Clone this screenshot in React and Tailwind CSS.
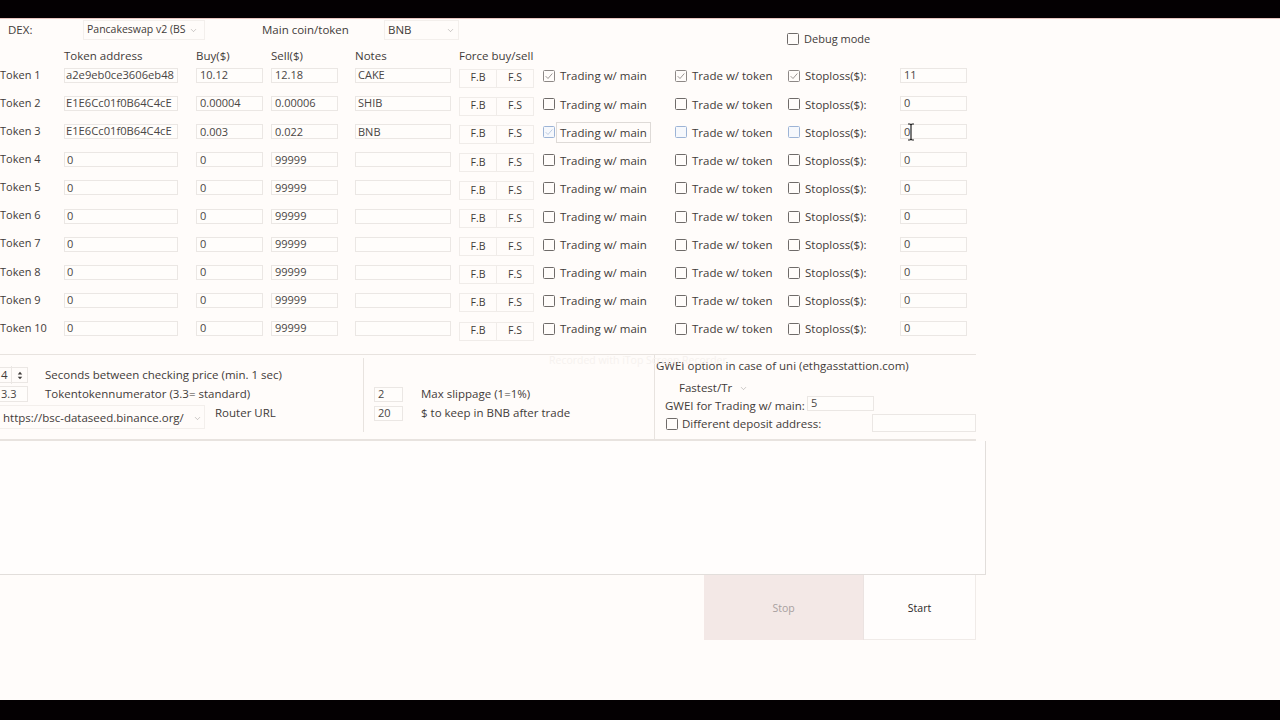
import { ChevronDown } from "lucide-react";

const tokens = [
  { address: "a2e9eb0ce3606eb48", buy: "10.12", sell: "12.18", notes: "CAKE", stop: "11", checked: true },
  { address: "E1E6Cc01f0B64C4cE", buy: "0.00004", sell: "0.00006", notes: "SHIB", stop: "0" },
  { address: "E1E6Cc01f0B64C4cE", buy: "0.003", sell: "0.022", notes: "BNB", stop: "0", focused: true },
  { address: "0", buy: "0", sell: "99999", notes: "", stop: "0" },
  { address: "0", buy: "0", sell: "99999", notes: "", stop: "0" },
  { address: "0", buy: "0", sell: "99999", notes: "", stop: "0" },
  { address: "0", buy: "0", sell: "99999", notes: "", stop: "0" },
  { address: "0", buy: "0", sell: "99999", notes: "", stop: "0" },
  { address: "0", buy: "0", sell: "99999", notes: "", stop: "0" },
  { address: "0", buy: "0", sell: "99999", notes: "", stop: "0" },
];

function Check({ checked, hot }) {
  return (
    <span
      className={`flex h-[12px] w-[12px] shrink-0 items-center justify-center rounded-[1.5px] border ${
        hot ? "border-[#9db4d6] bg-[#f6f8fc]" : checked ? "border-[#8d8886]" : "border-[#6f6b69]"
      }`}
    >
      {checked && (
        <svg viewBox="0 0 12 12" className="h-[10px] w-[10px]" fill="none" stroke={hot ? "#a9bcd8" : "#77726f"} strokeWidth="0.9">
          <path d="M2 6.2 4.8 9 10 3" />
        </svg>
      )}
    </span>
  );
}

function Field({ value, className = "" }) {
  return (
    <input
      readOnly
      value={value}
      className={`h-[15px] border border-[#ebe7e4] bg-[#fffdfb] text-[#4a4644] outline-none ${className}`}
    />
  );
}

function Dropdown({ text, className = "" }) {
  return (
    <div className={`flex items-center border border-[#f3efec] text-[#3f3b39] ${className}`}>
      <span className="flex-1 overflow-hidden whitespace-nowrap">{text}</span>
      <ChevronDown className="h-[9px] w-[9px] shrink-0 text-[#8c8886]" strokeWidth={1.2} />
    </div>
  );
}

function TokenRow({ index, token }) {
  return (
    <div className="flex h-[28.11px] items-center">
      <div className="w-[64px] shrink-0 whitespace-nowrap text-[11px]">Token {index + 1}</div>
      <Field
        value={token.address}
        className={`mt-px w-[114px] ${token.address === "0" ? "pl-[2px] text-[11px]" : "pl-px text-[11.2px]"}`}
      />
      <Field value={token.buy} className="ml-[18px] mt-px w-[67px] pl-[3px] text-[11px]" />
      <Field value={token.sell} className="ml-[8px] mt-px w-[67px] pl-[3px] text-[11px]" />
      <Field value={token.notes} className="ml-[17px] mt-px w-[96px] pl-[2px] text-[11px]" />
      <div className="ml-[8px] mt-[6px] flex h-[19px] w-[75px] text-[10.5px]">
        <button className="h-full w-[37px] border border-r-0 border-[#f0ece9] text-[#3f3b39]">F.B</button>
        <button className="h-full w-[38px] border border-[#f0ece9] text-[#3f3b39]">F.S</button>
      </div>
      <div className="ml-[9px] mt-[2px] flex w-[132px] items-center">
        <Check checked={token.checked || token.focused} hot={token.focused} />
        <span
          className={`ml-px whitespace-nowrap border px-[3px] py-px ${
            token.focused ? "border-[#dedad7]" : "border-transparent"
          }`}
        >
          Trading w/ main
        </span>
      </div>
      <div className="mt-[2px] flex w-[113px] items-center">
        <Check checked={token.checked} hot={token.focused} />
        <span className="ml-[5px] whitespace-nowrap">Trade w/ token</span>
      </div>
      <div className="mt-[2px] flex w-[112px] items-center">
        <Check checked={token.checked} hot={token.focused} />
        <span className="ml-[5px] whitespace-nowrap">Stoploss($):</span>
      </div>
      <Field value={token.stop} className="mt-px w-[67px] pl-[3px] text-[11px]" />
    </div>
  );
}

export default function App() {
  return (
    <div className="relative flex h-[720px] w-[1280px] flex-col overflow-hidden bg-[#fffcfa] font-['Open_Sans',sans-serif] text-[11.5px] text-[#3f3b39]">
      <div className="h-[19px] shrink-0 border-b border-[#e8c4c0] bg-[#040002]" />

      {/* dex + main coin */}
      <div className="flex h-[32px] shrink-0 items-start pt-px">
        <div className="ml-[8px] w-[75px] leading-[20px]">DEX:</div>
        <Dropdown text="Pancakeswap v2 (BS" className="h-[20px] w-[122px] pl-[3px] pr-[6px] text-[10.5px]" />
        <div className="ml-[57px] w-[122px] leading-[20px]">Main coin/token</div>
        <Dropdown text="BNB" className="h-[20px] w-[75px] pl-[3px] pr-[3px]" />
        <div className="ml-[328px] mt-[11px] flex items-center">
          <Check />
          <span className="ml-[5px] whitespace-nowrap text-[11px]">Debug mode</span>
        </div>
      </div>

      {/* column headers */}
      <div className="flex h-[10px] shrink-0 items-center whitespace-nowrap">
        <div className="ml-[64px] w-[132px]">Token address</div>
        <div className="w-[75px]">Buy($)</div>
        <div className="w-[84px]">Sell($)</div>
        <div className="w-[104px]">Notes</div>
        <div>Force buy/sell</div>
      </div>

      <div className="shrink-0">
        {tokens.map((token, i) => (
          <TokenRow key={i} index={i} token={token} />
        ))}
      </div>

      {/* settings strip */}
      <div className="mt-[12px] flex h-[87px] w-[976px] shrink-0 border-t border-b-2 border-[#e8e3df]">
        <div className="mt-[3px] h-[74px] w-[364px] shrink-0 border-r border-[#e8e3df]">
          <div className="mt-[9px] flex h-[16px] items-center">
            <div className="flex h-[16px] w-[28px] items-center justify-between border-y border-r border-[#ebe7e4] pl-px pr-[4px]">
              <span className="w-[11px] border-r border-[#ebe7e4]">4</span>
              <svg viewBox="0 0 8 12" className="h-[11px] w-[6px]" fill="#3f3b39">
                <path d="M4 1 7 4.5H1zM4 11 1 7.5h6z" />
              </svg>
            </div>
            <span className="ml-[17px] whitespace-nowrap">Seconds between checking price (min. 1 sec)</span>
          </div>
          <div className="mt-[3px] flex h-[16px] items-center">
            <Field value="3.3" className="h-[16px] w-[28px] border-l-0 pl-px text-[11px]" />
            <span className="ml-[17px] whitespace-nowrap">Tokentokennumerator (3.3= standard)</span>
          </div>
          <div className="mt-[3px] flex items-start">
            <Dropdown text="https://bsc-dataseed.binance.org/" className="h-[24px] w-[205px] border-l-0 pl-[3px] pr-[2px] pt-[2px] text-[11.5px]" />
            <span className="ml-[10px] mt-[-1px] whitespace-nowrap">Router URL</span>
          </div>
        </div>

        <div className="w-[291px] shrink-0 border-r border-[#e8e3df] pl-[10px] pt-[31px]">
          <div className="flex h-[16px] items-center">
            <Field value="2" className="w-[29px] pl-[3px] text-[11px]" />
            <span className="ml-[18px] whitespace-nowrap">Max slippage (1=1%)</span>
          </div>
          <div className="mt-[3px] flex h-[16px] items-center">
            <Field value="20" className="w-[29px] pl-[3px] text-[11px]" />
            <span className="ml-[18px] whitespace-nowrap">$ to keep in BNB after trade</span>
          </div>
        </div>

        <div className="min-w-0 flex-1 pl-px">
          <div className="mt-[3px] h-[16px] whitespace-nowrap leading-[16px]">GWEI option in case of uni (ethgasstattion.com)</div>
          <Dropdown text="Fastest/Tr" className="ml-[19px] mt-[4px] h-[20px] w-[75px] border-transparent pl-[3px] pr-px" />
          <div className="ml-[9px] flex h-[15px] items-center">
            <span className="w-[142px] whitespace-nowrap">GWEI for Trading w/ main:</span>
            <Field value="5" className="mt-[-4px] w-[67px] pl-[3px] text-[11px]" />
          </div>
          <div className="ml-[10px] mt-[2px] flex h-[18px] items-center">
            <Check />
            <span className="ml-[4px] w-[190px] whitespace-nowrap">Different deposit address:</span>
            <Field value="" className="mt-[-2px] h-[18px] w-[104px]" />
          </div>
        </div>
      </div>

      {/* log box */}
      <div className="h-[134px] w-[986px] shrink-0 border-r border-b border-[#e2dedb] bg-[#fffdfc]" />

      <div className="ml-[704px] flex h-[65px] shrink-0">
        <button className="h-full w-[160px] border-r border-[#ebe3e1] bg-[#f3e8e6] pt-[2px] text-[10.5px] text-[#a8a09f]">Stop</button>
        <button className="h-full w-[112px] border-r border-b border-[#f0ebe8] bg-[#fffdfc] pt-[3px] text-[10.5px] text-[#2b2827]">Start</button>
      </div>

      <div className="flex-1" />
      <div className="h-[20px] shrink-0 bg-[#040002]" />

      {/* recorder watermark */}
      <div className="absolute left-[549px] top-[353px] whitespace-nowrap text-[10.5px] text-[#f6f2ef]">
        Recorded with iTop Screen Recorder
      </div>

      {/* mouse i-beam */}
      <svg viewBox="0 0 10 18" className="absolute left-[906px] top-[123px] h-[18px] w-[10px]" fill="none" stroke="#222" strokeWidth="1.2">
        <path d="M2 1h2l1 1 1-1h2M5 2v14M2 17h2l1-1 1 1h2" />
      </svg>
    </div>
  );
}
